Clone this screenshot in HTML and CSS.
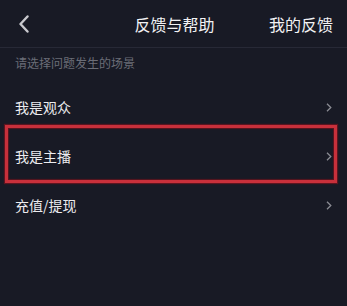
FILE: index.html
```html
<!DOCTYPE html>
<html lang="zh-CN">
<head>
<meta charset="utf-8">
<link rel="stylesheet" href="styles.css">
</head>
<body>
<div class="page">
  <header class="nav">
    <span class="back">
      <svg width="12" height="18" viewBox="0 0 12 18"><polyline points="9.5,1.5 2.5,9 9.5,16.5" fill="none" stroke="#c9c9ce" stroke-width="2.4" stroke-linecap="round" stroke-linejoin="round"/></svg>
    </span>
    <span class="title">反馈与帮助</span>
    <span class="right">我的反馈</span>
  </header>
  <div class="hint">请选择问题发生的场景</div>
  <ul class="list">
    <li class="row"><span>我是观众</span><svg class="chev" width="6" height="9" viewBox="0 0 6 9"><polyline points="1,0.8 4.8,4.5 1,8.2" fill="none" stroke="#8a8b93" stroke-width="1.3"/></svg></li>
    <li class="row marked"><span>我是主播</span><svg class="chev" width="6" height="9" viewBox="0 0 6 9"><polyline points="1,0.8 4.8,4.5 1,8.2" fill="none" stroke="#8a8b93" stroke-width="1.3"/></svg><span class="highlight"></span></li>
    <li class="row"><span>充值/提现</span><svg class="chev" width="6" height="9" viewBox="0 0 6 9"><polyline points="1,0.8 4.8,4.5 1,8.2" fill="none" stroke="#8a8b93" stroke-width="1.3"/></svg></li>
  </ul>
</div>
</body>
</html>
```
FILE: styles.css
```css
html, body {
  margin: 0;
  padding: 0;
  background: #181a25;
}
.page {
  width: 347px;
  height: 306px;
  overflow: hidden;
  background: #181a25;
  font-family: "Noto Sans CJK SC", "Noto Sans", sans-serif;
}
.nav {
  height: 47px;
  border-bottom: 1px solid #272936;
  display: grid;
  grid-template-columns: 1fr auto 1fr;
  align-items: center;
  padding: 0 14px 0 18px;
}
.back {
  display: flex;
  align-items: center;
  height: 18px;
  margin-top: 1px;
}
.title {
  font-size: 16px;
  color: #f2f2f4;
  line-height: 20px;
  margin-left: -2px;
}
.right {
  justify-self: end;
  font-size: 16px;
  color: #f2f2f4;
  line-height: 20px;
}
.hint {
  height: 34px;
  box-sizing: border-box;
  padding: 6px 15px 0;
  font-size: 12px;
  line-height: 17px;
  color: #6b6d77;
}
.list {
  list-style: none;
  margin: 0;
  padding: 0;
}
.row {
  position: relative;
  height: 49px;
  display: flex;
  align-items: center;
  justify-content: space-between;
  padding: 0 15px 0 15px;
  font-size: 14px;
  color: #ececef;
}
.chev {
  display: block;
  margin-top: 1px;
}
.highlight {
  position: absolute;
  top: -6px;
  bottom: -3px;
  left: 5px;
  right: 10px;
  border: 3px solid #c8303b;
  box-shadow: 0 0 1px 1px rgba(120, 20, 30, 0.7), inset 0 0 1px 1px rgba(120, 20, 30, 0.7);
  pointer-events: none;
}
```
